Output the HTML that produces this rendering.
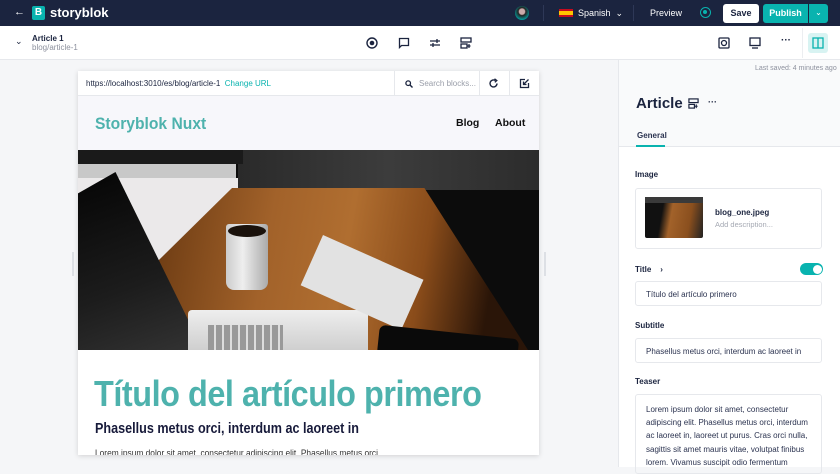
<!DOCTYPE html>
<html><head><meta charset="utf-8">
<style>
*{box-sizing:border-box;margin:0;padding:0}
body{width:840px;height:467px;overflow:hidden;font-family:"Liberation Sans",sans-serif;background:#f5f6f8;position:relative;color:#1b243f}
.abs{position:absolute}
svg{display:block}
</style></head><body>
<div class="abs" style="left:0;top:0;width:840px;height:26px;background:#1b243f"></div>
<div class="abs" style="left:14px;top:6px;color:#fff;font-size:11px;font-weight:bold">←</div>
<div class="abs" style="left:32px;top:6px;width:13px;height:14px;background:#09b3af;border-radius:2px;color:#fff;font-size:10px;font-weight:bold;text-align:center;line-height:14px">B</div>
<div class="abs" style="left:50px;top:5px;color:#fff;font-size:13px;font-weight:bold">storyblok</div>
<div class="abs" style="left:515px;top:6px;width:14px;height:14px;border-radius:50%;background:radial-gradient(circle at 50% 40%,#caa 0 25%,#222 35%,#0aa 80%)"></div>
<div class="abs" style="left:543px;top:5px;width:1px;height:16px;background:#2e3857"></div>
<div class="abs" style="left:559px;top:9px;width:14px;height:8px;background:linear-gradient(#c60b1e 0 25%,#ffc400 25% 75%,#c60b1e 75%)"></div>
<div class="abs" style="left:578px;top:8px;color:#fff;font-size:9px">Spanish &nbsp;⌄</div>
<div class="abs" style="left:633px;top:5px;width:1px;height:16px;background:#2e3857"></div>
<div class="abs" style="left:650px;top:8px;color:#fff;font-size:9px">Preview</div>
<div class="abs" style="left:700px;top:7px;width:11px;height:11px;border-radius:50%;border:1.5px solid #09b3af"><div style="margin:2px;width:4px;height:4px;border-radius:50%;background:#09b3af"></div></div>
<div class="abs" style="left:723px;top:4px;width:36px;height:19px;background:#fff;border-radius:3px;font-size:9px;font-weight:bold;text-align:center;line-height:19px">Save</div>
<div class="abs" style="left:763px;top:4px;width:45px;height:19px;background:#09b3af;border-radius:3px 0 0 3px;color:#fff;font-size:9px;font-weight:bold;text-align:center;line-height:19px">Publish</div>
<div class="abs" style="left:809px;top:4px;width:19px;height:19px;background:#09b3af;border-radius:0 3px 3px 0;color:#fff;font-size:8px;text-align:center;line-height:17px">⌄</div>
<div class="abs" style="left:0;top:26px;width:840px;height:34px;background:#fff;border-bottom:1px solid #e6e8ec"></div>
<div class="abs" style="left:15px;top:36px;font-size:9px">⌄</div>
<div class="abs" style="left:32px;top:34px;font-size:8px;font-weight:bold">Article 1</div>
<div class="abs" style="left:32px;top:43px;font-size:8px;color:#8d919e">blog/article-1</div>
<svg class="abs" style="left:366px;top:37px" width="12" height="12" viewBox="0 0 12 12"><circle cx="6" cy="6" r="5" fill="none" stroke="#1b243f" stroke-width="1.4"/><circle cx="6" cy="6" r="2.3" fill="#1b243f"/></svg>
<svg class="abs" style="left:398px;top:37px" width="12" height="12" viewBox="0 0 12 12"><path d="M1.5 1.5h9v7h-7l-2 2z" fill="none" stroke="#1b243f" stroke-width="1.3"/></svg>
<svg class="abs" style="left:429px;top:38px" width="12" height="10" viewBox="0 0 12 10"><path d="M1 3h10M8 1v4M1 7h10M4 5v4" stroke="#1b243f" stroke-width="1.3"/></svg>
<svg class="abs" style="left:460px;top:37px" width="12" height="12" viewBox="0 0 12 12"><rect x="1" y="1" width="10" height="4" fill="none" stroke="#1b243f" stroke-width="1.3"/><rect x="1" y="7" width="6" height="4" fill="none" stroke="#1b243f" stroke-width="1.3"/><path d="M9 7v4M7.5 9h3" stroke="#1b243f" stroke-width="1.2"/></svg>
<svg class="abs" style="left:718px;top:37px" width="12" height="12" viewBox="0 0 12 12"><rect x="1" y="1" width="10" height="10" rx="1" fill="none" stroke="#1b243f" stroke-width="1.3"/><circle cx="6" cy="6" r="2.5" fill="none" stroke="#1b243f" stroke-width="1.3"/></svg>
<svg class="abs" style="left:749px;top:37px" width="12" height="12" viewBox="0 0 12 12"><rect x="1" y="1" width="10" height="7.5" fill="none" stroke="#1b243f" stroke-width="1.3"/><path d="M3 11h6" stroke="#1b243f" stroke-width="1.3"/></svg>
<div class="abs" style="left:781px;top:35px;font-size:10px;font-weight:bold">···</div>
<div class="abs" style="left:802px;top:28px;width:1px;height:30px;background:#eceef1"></div>
<div class="abs" style="left:808px;top:33px;width:20px;height:20px;background:#d8f3f2;border-radius:3px"></div>
<svg class="abs" style="left:812px;top:37px" width="12" height="12" viewBox="0 0 12 12"><rect x="1" y="1" width="10" height="10" fill="none" stroke="#09b3af" stroke-width="1.3"/><path d="M6 1v10" stroke="#09b3af" stroke-width="1.3"/></svg>
<div class="abs" style="left:72px;top:252px;width:2px;height:24px;background:#dde0e5"></div>
<div class="abs" style="left:544px;top:252px;width:2px;height:24px;background:#dde0e5"></div>
<div class="abs" style="left:78px;top:71px;width:461px;height:384px;background:#fff;box-shadow:0 1px 5px rgba(0,0,0,.15);overflow:hidden">
 <div class="abs" style="left:0;top:0;width:461px;height:25px;border-bottom:1px solid #e6e8ec;background:#fff"></div>
 <div class="abs" style="left:8px;top:8px;font-size:8px">https://localhost:3010/es/blog/article-1 &nbsp;<span style="color:#09b3af">Change URL</span></div>
 <div class="abs" style="left:316px;top:0;width:1px;height:25px;background:#e6e8ec"></div>
 <svg class="abs" style="left:327px;top:9px" width="8" height="8" viewBox="0 0 8 8"><circle cx="3.2" cy="3.2" r="2.3" fill="none" stroke="#1b243f" stroke-width="1.3"/><path d="M5 5l2.5 2.5" stroke="#1b243f" stroke-width="1.4"/></svg>
 <div class="abs" style="left:341px;top:8px;font-size:8px;color:#9a9ea9">Search blocks...</div>
 <div class="abs" style="left:401px;top:0;width:1px;height:25px;background:#e6e8ec"></div>
 <svg class="abs" style="left:410px;top:7px" width="11" height="11" viewBox="0 0 11 11"><path d="M9 5.5A3.5 3.5 0 1 1 7.5 2.6" fill="none" stroke="#1b243f" stroke-width="1.4"/><path d="M6.5 0.8l2.3 1.7-2 1.8" fill="none" stroke="#1b243f" stroke-width="1.3"/></svg>
 <div class="abs" style="left:431px;top:0;width:1px;height:25px;background:#e6e8ec"></div>
 <svg class="abs" style="left:441px;top:7px" width="11" height="11" viewBox="0 0 11 11"><path d="M6 1.5H1.5v8h8V5" fill="none" stroke="#1b243f" stroke-width="1.3"/><path d="M9.5 1.5l-5 5M4.5 3.5v3h3" fill="none" stroke="#1b243f" stroke-width="1.3"/></svg>
 <div class="abs" style="left:0;top:25px;width:461px;height:54px;background:#f7f7fb"></div>
 <div class="abs" style="left:17px;top:43px;font-size:17px;font-weight:bold;color:#4eb2ad;transform:scaleX(0.92);transform-origin:0 0;white-space:nowrap">Storyblok Nuxt</div>
 <div class="abs" style="left:378px;top:46px;font-size:10.5px;font-weight:bold;color:#111">Blog</div>
 <div class="abs" style="left:417px;top:46px;font-size:10.5px;font-weight:bold;color:#111">About</div>
 <div class="abs" style="left:0;top:79px;width:461px;height:200px;background:#0c0c0c;overflow:hidden">
  <div class="abs" style="left:160px;top:0;width:301px;height:40px;background:linear-gradient(90deg,#2a2a2a,#3c3c3c 50%,#2c2c2c)"></div>
  <div class="abs" style="left:0;top:0;width:165px;height:14px;background:#1a1a1a"></div>
  <div class="abs" style="left:0;top:14px;width:158px;height:16px;background:#c8c8c8"></div>
  <div class="abs" style="left:0;top:28px;width:160px;height:150px;background:#ebe9ea"></div>
  <div class="abs" style="left:80px;top:38px;width:370px;height:162px;background:linear-gradient(100deg,#6b3a12,#a2622a 30%,#b06e30 50%,#8a4c1a 70%,#2a1508 88%);clip-path:polygon(20% 0,72% 0,100% 100%,0 100%,0 45%)"></div>
  <div class="abs" style="left:0;top:22px;width:125px;height:178px;background:linear-gradient(160deg,#050505,#1c1c1c 60%,#333);clip-path:polygon(0 12%,30% 0,100% 100%,0 100%)"></div>
  <div class="abs" style="left:110px;top:160px;width:180px;height:40px;background:linear-gradient(#eee,#cfcfcf);border-radius:4px 4px 0 0"></div>
  <div class="abs" style="left:130px;top:175px;width:75px;height:25px;background:repeating-linear-gradient(90deg,#999 0 6px,#ddd 6px 8px)"></div>
  <div class="abs" style="left:148px;top:74px;width:42px;height:66px;background:linear-gradient(90deg,#ccc,#eee 40%,#aaa);border-radius:3px 3px 8px 8px"></div>
  <div class="abs" style="left:150px;top:75px;width:38px;height:12px;background:#1a120c;border-radius:50%"></div>
  <div class="abs" style="left:245px;top:85px;width:110px;height:55px;background:#e2e2e2;transform:rotate(24deg);transform-origin:0 0"></div>
  <div class="abs" style="left:300px;top:182px;width:140px;height:30px;background:#0a0a0a;border-radius:6px;transform:rotate(6deg)"></div>
 </div>
 <div class="abs" style="left:16px;top:302px;font-size:36px;font-weight:bold;color:#4eb2ad;letter-spacing:-0.5px;white-space:nowrap;transform:scaleX(0.9);transform-origin:0 0">Título del artículo primero</div>
 <div class="abs" style="left:17px;top:349px;font-size:15px;font-weight:bold;color:#171a3a;white-space:nowrap;transform:scaleX(0.84);transform-origin:0 0">Phasellus metus orci, interdum ac laoreet in</div>
 <div class="abs" style="left:17px;top:377px;font-size:9.5px;color:#333;white-space:nowrap;transform:scaleX(0.88);transform-origin:0 0">Lorem ipsum dolor sit amet, consectetur adipiscing elit. Phasellus metus orci</div>
</div>
<div class="abs" style="left:618px;top:60px;width:222px;height:407px;background:#fff;border-left:1px solid #e6e8ec"></div>
<div class="abs" style="left:619px;top:60px;width:221px;height:87px;background:#f9fafb;border-bottom:1px solid #e6e8ec"></div>
<div class="abs" style="left:755px;top:65px;font-size:7px;color:#8d919e">Last saved: 4 minutes ago</div>
<div class="abs" style="left:636px;top:95px;font-size:15px;font-weight:bold">Article</div>
<svg class="abs" style="left:688px;top:98px" width="11" height="11" viewBox="0 0 12 12"><rect x="1" y="1" width="10" height="4" fill="none" stroke="#1b243f" stroke-width="1.3"/><rect x="1" y="7" width="6" height="4" fill="none" stroke="#1b243f" stroke-width="1.3"/><path d="M9 7v4M7.5 9h3" stroke="#1b243f" stroke-width="1.2"/></svg>
<div class="abs" style="left:708px;top:97px;font-size:9px;font-weight:bold">···</div>
<div class="abs" style="left:637px;top:131px;font-size:8px;font-weight:bold;color:#2b3350">General</div>
<div class="abs" style="left:636px;top:145px;width:29px;height:2px;background:#09b3af"></div>
<div class="abs" style="left:635px;top:170px;font-size:8px;font-weight:bold">Image</div>
<div class="abs" style="left:635px;top:188px;width:187px;height:61px;border:1px solid #e6e8ec;border-radius:3px"></div>
<div class="abs" style="left:645px;top:197px;width:58px;height:41px;background:linear-gradient(100deg,#111 0 30%,#a2622a 45%,#8a4f1e 75%,#222);border-radius:2px"></div>
<div class="abs" style="left:645px;top:197px;width:58px;height:6px;background:#3a3a3a"></div>
<div class="abs" style="left:715px;top:208px;font-size:8px;font-weight:bold">blog_one.jpeg</div>
<div class="abs" style="left:715px;top:220px;font-size:7.5px;color:#a5a9b3">Add description...</div>
<div class="abs" style="left:635px;top:265px;font-size:8px;font-weight:bold">Title &nbsp;&nbsp;&nbsp;›</div>
<div class="abs" style="left:800px;top:263px;width:23px;height:12px;border-radius:6px;background:#09b3af"><div style="position:absolute;right:1.5px;top:1.5px;width:9px;height:9px;border-radius:50%;background:#fff"></div></div>
<div class="abs" style="left:635px;top:281px;width:187px;height:25px;border:1px solid #e6e8ec;border-radius:3px;font-size:8px;padding:8px 10px;color:#2b3350">Título del artículo primero</div>
<div class="abs" style="left:635px;top:321px;font-size:8px;font-weight:bold">Subtitle</div>
<div class="abs" style="left:635px;top:338px;width:187px;height:25px;border:1px solid #e6e8ec;border-radius:3px;font-size:8px;padding:8px 10px;color:#2b3350;white-space:nowrap;overflow:hidden">Phasellus metus orci, interdum ac laoreet in</div>
<div class="abs" style="left:635px;top:377px;font-size:8px;font-weight:bold">Teaser</div>
<div class="abs" style="left:635px;top:394px;width:187px;height:80px;border:1px solid #e6e8ec;border-radius:3px;font-size:8px;line-height:13.2px;padding:8px 10px;color:#2b3350;overflow:hidden">Lorem ipsum dolor sit amet, consectetur adipiscing elit. Phasellus metus orci, interdum ac laoreet in, laoreet ut purus. Cras orci nulla, sagittis sit amet mauris vitae, volutpat finibus lorem. Vivamus suscipit odio fermentum augue</div>
</body></html>
